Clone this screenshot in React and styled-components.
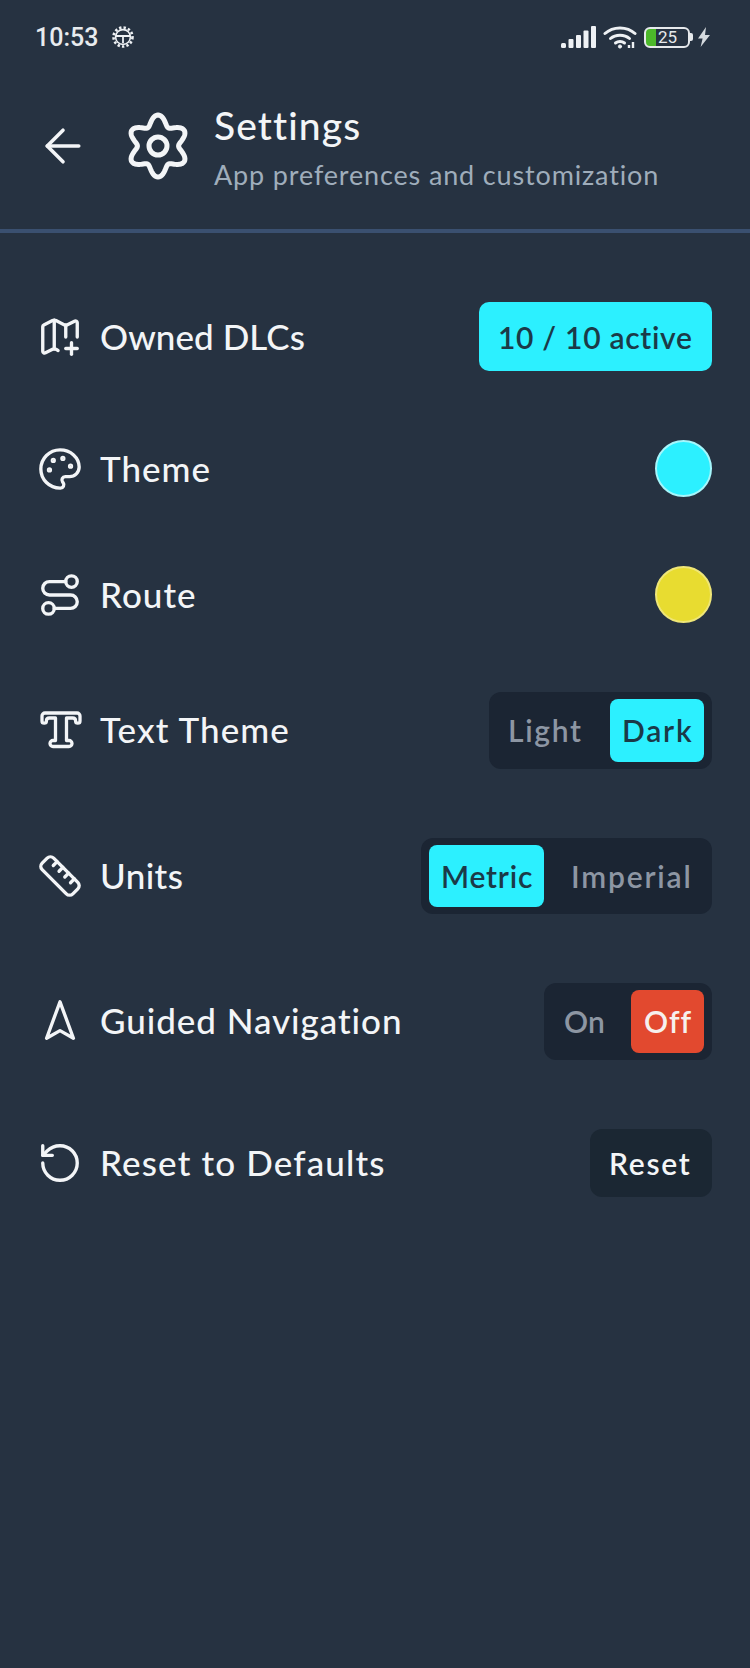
import React from "react";
import styled, { createGlobalStyle } from "styled-components";
import { ArrowLeft, MapPlus, Palette, Route, Ruler, Navigation2, RotateCcw } from "lucide-react";

const GlobalStyle = createGlobalStyle`
    html, body {
        margin: 0;
        padding: 0;
        background: #263241;
    }
    * {
        box-sizing: border-box;
    }
`;

// six lobed gear outline, the lucide one has the wrong shape
const gearPath = (() => {
    const points = [];
    for (let i = 0; i < 144; i++) {
        const a = (i / 144) * Math.PI * 2;
        const r = 26 + 5 * Math.cos(6 * a);
        points.push(`${(33 + r * Math.sin(a) * 0.98).toFixed(2)} ${(34 - r * Math.cos(a)).toFixed(2)}`);
    }
    return `M${points.join("L")}Z`;
})();

const GearIcon = () => (
    <svg width="66" height="68" viewBox="0 0 66 68" fill="none" stroke="#f3f5f7" strokeWidth="5" strokeLinejoin="round">
        <path d={gearPath} />
        <circle cx="33" cy="34" r="9" />
    </svg>
);

const StatusGear = () => (
    <svg width="24" height="24" viewBox="0 0 24 24" fill="none" stroke="#eef1f4">
        <circle cx="12" cy="12" r="9.5" strokeWidth="2.6" strokeDasharray="2.4 2.1" />
        <circle cx="12" cy="12" r="7.4" strokeWidth="1.6" />
        <path d="M5 11h14M12 11v7" strokeWidth="1.8" />
    </svg>
);

const SignalIcon = () => (
    <svg width="35" height="22" viewBox="0 0 35 22" fill="#eef1f4">
        <rect x="0" y="17" width="5" height="5" rx="1.5" />
        <rect x="7.5" y="13" width="5" height="9" rx="1" />
        <rect x="15" y="9" width="5" height="13" rx="1" />
        <rect x="22.5" y="4.5" width="5" height="17.5" rx="1" />
        <rect x="30" y="0" width="5" height="22" rx="1" />
    </svg>
);

const WifiIcon = () => (
    <svg width="34" height="24" viewBox="0 0 34 24" fill="none" stroke="#eef1f4" strokeWidth="3" strokeLinecap="round">
        <path d="M2 8.5C10 1 24 1 32 8.5" />
        <path d="M7.5 13.5C12.5 9 21.5 9 26.5 13.5" />
        <path d="M12.5 18C15 16 19 16 21.5 18" />
        <circle cx="17" cy="21.5" r="1.6" fill="#eef1f4" strokeWidth="1" />
        <path d="M26 20v3M30 17v6" strokeWidth="2.4" strokeLinecap="butt" />
    </svg>
);

const BoltIcon = () => (
    <svg width="14" height="20" viewBox="0 0 14 20" fill="#d5dade">
        <path d="M9 0 1 11.5h4.6L3.6 20 13 8H8z" />
    </svg>
);

const TextThemeGlyph = styled.svg`
    margin-left: 3px;
`;

const TextThemeIcon = () => (
    <TextThemeGlyph width="42" height="38" viewBox="0 0 42 38" fill="none" stroke="#f3f5f7" strokeWidth="3.3" strokeLinejoin="round" strokeLinecap="round">
        <path d="M5 2H37a3 3 0 0 1 3 3v5a2.200 2.200 0 0 1-4.400 0c0-2-1-3-3-3H26.500V29.500H29a3 3 0 0 1 0 6H13a3 3 0 0 1 0-6h2.500V7H9.400c-2 0-3 1-3 3a2.200 2.200 0 0 1-4.400 0V5a3 3 0 0 1 3-3z" />
    </TextThemeGlyph>
);

const Page = styled.div`
    width: 750px;
    min-height: 1668px;
    background: #263241;
    color: #f3f5f7;
    font-family: "Lato", "Noto Sans", sans-serif;
`;

const StatusBar = styled.div`
    height: 74px;
    padding: 0 39px 0 35px;
    display: flex;
    align-items: center;
    justify-content: space-between;
`;

const StatusGroup = styled.div`
    display: flex;
    align-items: center;
    gap: ${(p) => p.$gap}px;
`;

const Time = styled.span`
    font-family: "Roboto", sans-serif;
    font-size: 25px;
    font-weight: 500;
    color: #e8ebee;
`;

const Battery = styled.div`
    width: 46px;
    height: 21px;
    margin-right: -2px;
    padding-left: 12px;
    display: flex;
    align-items: center;
    border: 2.5px solid #e6e9ec;
    border-radius: 6px;
    background: linear-gradient(to right, #4cb82b 0 10px, transparent 10px);
    font-family: "Roboto", sans-serif;
    font-size: 17px;
    line-height: 1;
    color: #e6e9ec;
`;

const BatteryTip = styled.div`
    width: 3px;
    height: 8px;
    margin: 0 -3px 0 2px;
    background: #e6e9ec;
    border-radius: 0 2px 2px 0;
`;

const Header = styled.header`
    height: 159px;
    padding: 0 0 11px 36px;
    display: flex;
    align-items: center;
    border-bottom: 4px solid #3a5070;
`;

const BackButton = styled.div`
    display: flex;
    margin-right: 35px;
`;

const TitleBlock = styled.div`
    margin-left: 23px;
    margin-top: 2px;
`;

const Title = styled.h1`
    margin: 0;
    font-size: 39px;
    font-weight: 500;
    line-height: 46px;
    letter-spacing: 1.1px;
`;

const Subtitle = styled.p`
    margin: 9px 0 0;
    font-size: 27px;
    font-weight: 400;
    line-height: 36px;
    letter-spacing: 0.85px;
    color: #9fadbb;
`;

const List = styled.main`
    padding: 69px 38px 0 37px;
    display: flex;
    flex-direction: column;
    gap: 69px;
`;

const Row = styled.section`
    display: flex;
    align-items: center;
    justify-content: space-between;
`;

const RowLabel = styled.div`
    display: flex;
    align-items: center;
    font-size: 35px;
    font-weight: 500;
`;

const LabelText = styled.span`
    margin-top: -2px;
    letter-spacing: ${(p) => p.$spacing ?? 1}px;
`;

const IconSlot = styled.div`
    width: 63px;
    display: flex;
    align-items: center;
`;

const ActiveButton = styled.div`
    width: 233px;
    height: 69px;
    padding-left: 19px;
    display: flex;
    align-items: center;
    background: #2cf0ff;
    border-radius: 10px;
    color: #1b3a48;
    font-size: 30px;
    font-weight: 600;
    letter-spacing: 0.7px;
`;

const Swatch = styled.div`
    width: 57px;
    height: 57px;
    border-radius: 50%;
    background: ${(p) => p.$color};
    border: 2.5px solid ${(p) => p.$ring};
`;

const Segment = styled.div`
    height: 76.5px;
    padding: 7px 8px;
    display: flex;
    background: #1b2533;
    border-radius: 12px;
`;

const Option = styled.div`
    width: ${(p) => p.$width}px;
    padding-left: ${(p) => p.$inset}px;
    display: flex;
    align-items: center;
    border-radius: 8px;
    font-size: 30px;
    font-weight: 600;
    letter-spacing: ${(p) => p.$spacing ?? 0.9}px;
    background: ${(p) => p.$bg || "transparent"};
    color: ${(p) => p.$color || "#8d96a3"};
`;

const ResetButton = styled.div`
    width: 122px;
    height: 68px;
    padding-left: 19px;
    display: flex;
    align-items: center;
    background: #1b2733;
    border-radius: 12px;
    font-size: 30px;
    font-weight: 600;
    letter-spacing: 1.7px;
`;

const iconProps = { size: 46, strokeWidth: 1.75, color: "#f3f5f7" };

const SegmentRow = ({ icon, label, spacing, options }) => (
    <Row>
        <RowLabel>
            <IconSlot>{icon}</IconSlot>
            <LabelText $spacing={spacing}>{label}</LabelText>
        </RowLabel>
        <Segment>
            {options.map((o) => (
                <Option key={o.text} $width={o.width} $inset={o.inset} $bg={o.bg} $color={o.color} $spacing={o.spacing}>
                    {o.text}
                </Option>
            ))}
        </Segment>
    </Row>
);

const CYAN = "#2cf0ff";
const ON_CYAN = "#1b3a48";

export default function App() {
    return (
        <Page>
            <GlobalStyle />
            <StatusBar>
                <StatusGroup $gap={13}>
                    <Time>10:53</Time>
                    <StatusGear />
                </StatusGroup>
                <StatusGroup $gap={7}>
                    <SignalIcon />
                    <WifiIcon />
                    <StatusGroup $gap={0}>
                        <Battery>25</Battery>
                        <BatteryTip />
                    </StatusGroup>
                    <BoltIcon />
                </StatusGroup>
            </StatusBar>
            <Header>
                <BackButton>
                    <ArrowLeft size={54} strokeWidth={1.6} color="#f3f5f7" />
                </BackButton>
                <GearIcon />
                <TitleBlock>
                    <Title>Settings</Title>
                    <Subtitle>App preferences and customization</Subtitle>
                </TitleBlock>
            </Header>
            <List>
                <Row>
                    <RowLabel>
                        <IconSlot>
                            <MapPlus {...iconProps} />
                        </IconSlot>
                        <LabelText $spacing={0.05}>Owned DLCs</LabelText>
                    </RowLabel>
                    <ActiveButton>10 / 10 active</ActiveButton>
                </Row>
                <Row>
                    <RowLabel>
                        <IconSlot>
                            <Palette {...iconProps} />
                        </IconSlot>
                        <LabelText>Theme</LabelText>
                    </RowLabel>
                    <Swatch $color={CYAN} $ring="#a5f6fb" />
                </Row>
                <Row>
                    <RowLabel>
                        <IconSlot>
                            <Route {...iconProps} />
                        </IconSlot>
                        <LabelText>Route</LabelText>
                    </RowLabel>
                    <Swatch $color="#e8dc30" $ring="#efe677" />
                </Row>
                <SegmentRow
                    icon={<TextThemeIcon />}
                    label="Text Theme"
                    spacing={1.1}
                    options={[
                        { text: "Light", width: 113, inset: 11, spacing: 1.7 },
                        { text: "Dark", width: 94, inset: 12, spacing: 1.8, bg: CYAN, color: ON_CYAN },
                    ]}
                />
                <SegmentRow
                    icon={<Ruler {...iconProps} />}
                    label="Units"
                    spacing={0.4}
                    options={[
                        { text: "Metric", width: 115, inset: 12, spacing: 0.8, bg: CYAN, color: ON_CYAN },
                        { text: "Imperial", width: 160, inset: 27, spacing: 1.8 },
                    ]}
                />
                <SegmentRow
                    icon={<Navigation2 {...iconProps} />}
                    label="Guided Navigation"
                    spacing={0.95}
                    options={[
                        { text: "On", width: 79, inset: 12, spacing: 0.2 },
                        { text: "Off", width: 73, inset: 13, bg: "#e2492f", color: "#f6f0ee" },
                    ]}
                />
                <Row>
                    <RowLabel>
                        <IconSlot>
                            <RotateCcw {...iconProps} />
                        </IconSlot>
                        <LabelText $spacing={1.15}>Reset to Defaults</LabelText>
                    </RowLabel>
                    <ResetButton>Reset</ResetButton>
                </Row>
            </List>
        </Page>
    );
}
